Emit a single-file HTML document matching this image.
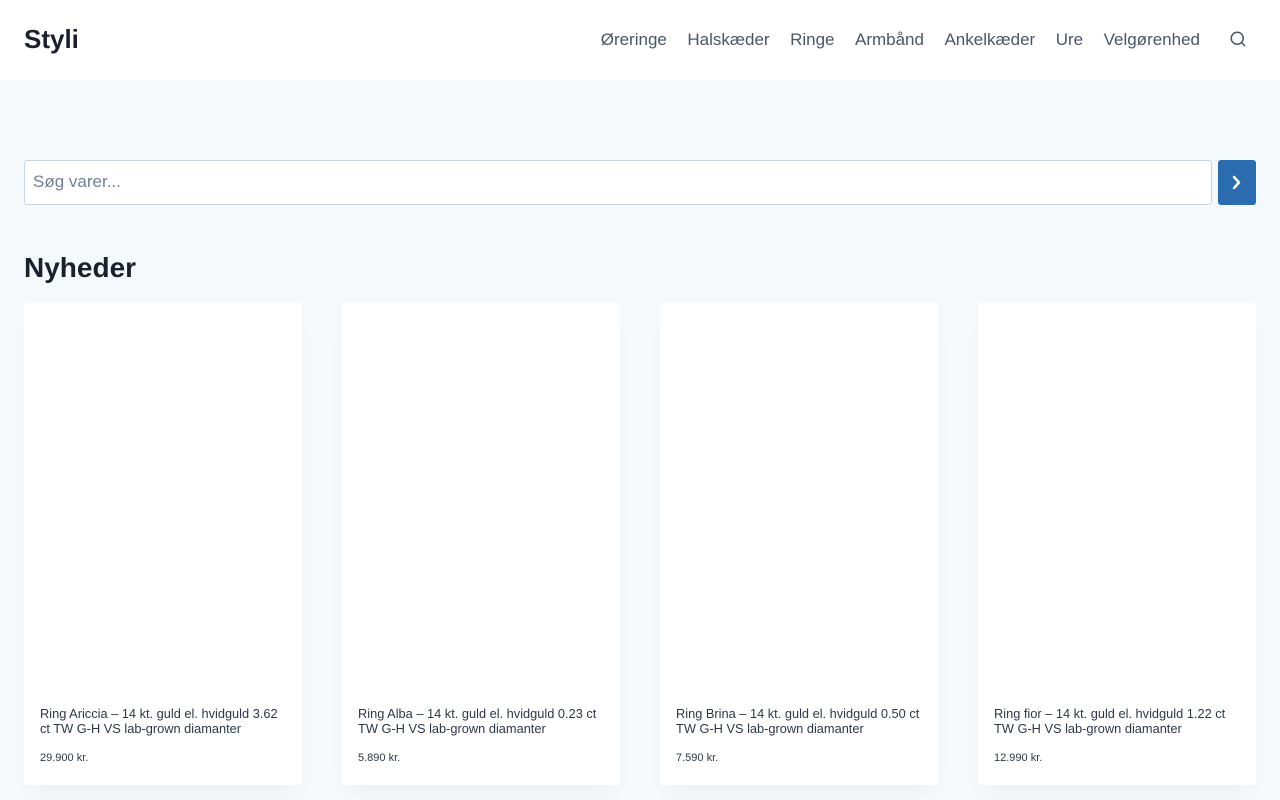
<!DOCTYPE html>
<html><head><meta charset="utf-8">
<style>
*{box-sizing:border-box;margin:0;padding:0}
body{width:1280px;height:800px;overflow:hidden;background:#f6f9fc;font-family:"Liberation Sans",sans-serif;color:#1a202c}
header{height:80px;background:#fff;position:relative}
.logo{position:absolute;left:24px;top:22px;font-size:26px;font-weight:bold;color:#1a202c;line-height:34px}
nav{position:absolute;right:80px;top:29px;display:flex;gap:0}
nav a{font-size:17px;color:#4a5568;text-decoration:none;margin-left:20.5px;line-height:22px}
.sicon{position:absolute;left:1229px;top:30px}
.search{position:absolute;left:24px;top:160px;width:1188px;height:45px;background:#fff;border:1px solid #cbd5e0;border-radius:3px;font-size:17px;color:#718096;padding:11px 8px}
.btn{position:absolute;left:1218px;top:160px;width:38px;height:45px;background:#2b6cb0;border-radius:3px}
h2{position:absolute;left:24px;top:250px;font-size:28px;font-weight:bold;line-height:36px}
.card{position:absolute;top:303px;width:278px;height:482px;background:#fff;border-radius:3px;box-shadow:0 15px 25px -10px rgba(0,0,0,0.05)}
.card .t{position:absolute;left:16px;top:403px;right:16px;font-size:12.8px;line-height:15px;color:#2d3748}
.card .p{position:absolute;left:16px;top:449px;font-size:11px;color:#2d3748}
</style></head><body>
<header>
<div class="logo">Styli</div>
<nav><a>Øreringe</a><a>Halskæder</a><a>Ringe</a><a>Armbånd</a><a>Ankelkæder</a><a>Ure</a><a>Velgørenhed</a></nav>
<svg class="sicon" width="18" height="18" viewBox="0 0 24 24" fill="none" stroke="#4a5568" stroke-width="2" stroke-linecap="round"><circle cx="11" cy="11" r="8"/><path d="M21 21l-4.35-4.35"/></svg>
</header>
<div class="search">Søg varer...</div>
<div class="btn"><svg width="38" height="45" viewBox="0 0 38 45" fill="none" stroke="#fff" stroke-width="2.5" stroke-linecap="round" stroke-linejoin="round"><path d="M16 17l5 5.5-5 5.5"/></svg></div>
<h2>Nyheder</h2>
<div class="card" style="left:24px"><div class="t">Ring Ariccia – 14 kt. guld el. hvidguld 3.62 ct TW G-H VS lab-grown diamanter</div><div class="p">29.900 kr.</div></div>
<div class="card" style="left:342px"><div class="t">Ring Alba – 14 kt. guld el. hvidguld 0.23 ct TW G-H VS lab-grown diamanter</div><div class="p">5.890 kr.</div></div>
<div class="card" style="left:660px"><div class="t">Ring Brina – 14 kt. guld el. hvidguld 0.50 ct TW G-H VS lab-grown diamanter</div><div class="p">7.590 kr.</div></div>
<div class="card" style="left:978px"><div class="t">Ring fior – 14 kt. guld el. hvidguld 1.22 ct TW G-H VS lab-grown diamanter</div><div class="p">12.990 kr.</div></div>
</body></html>
